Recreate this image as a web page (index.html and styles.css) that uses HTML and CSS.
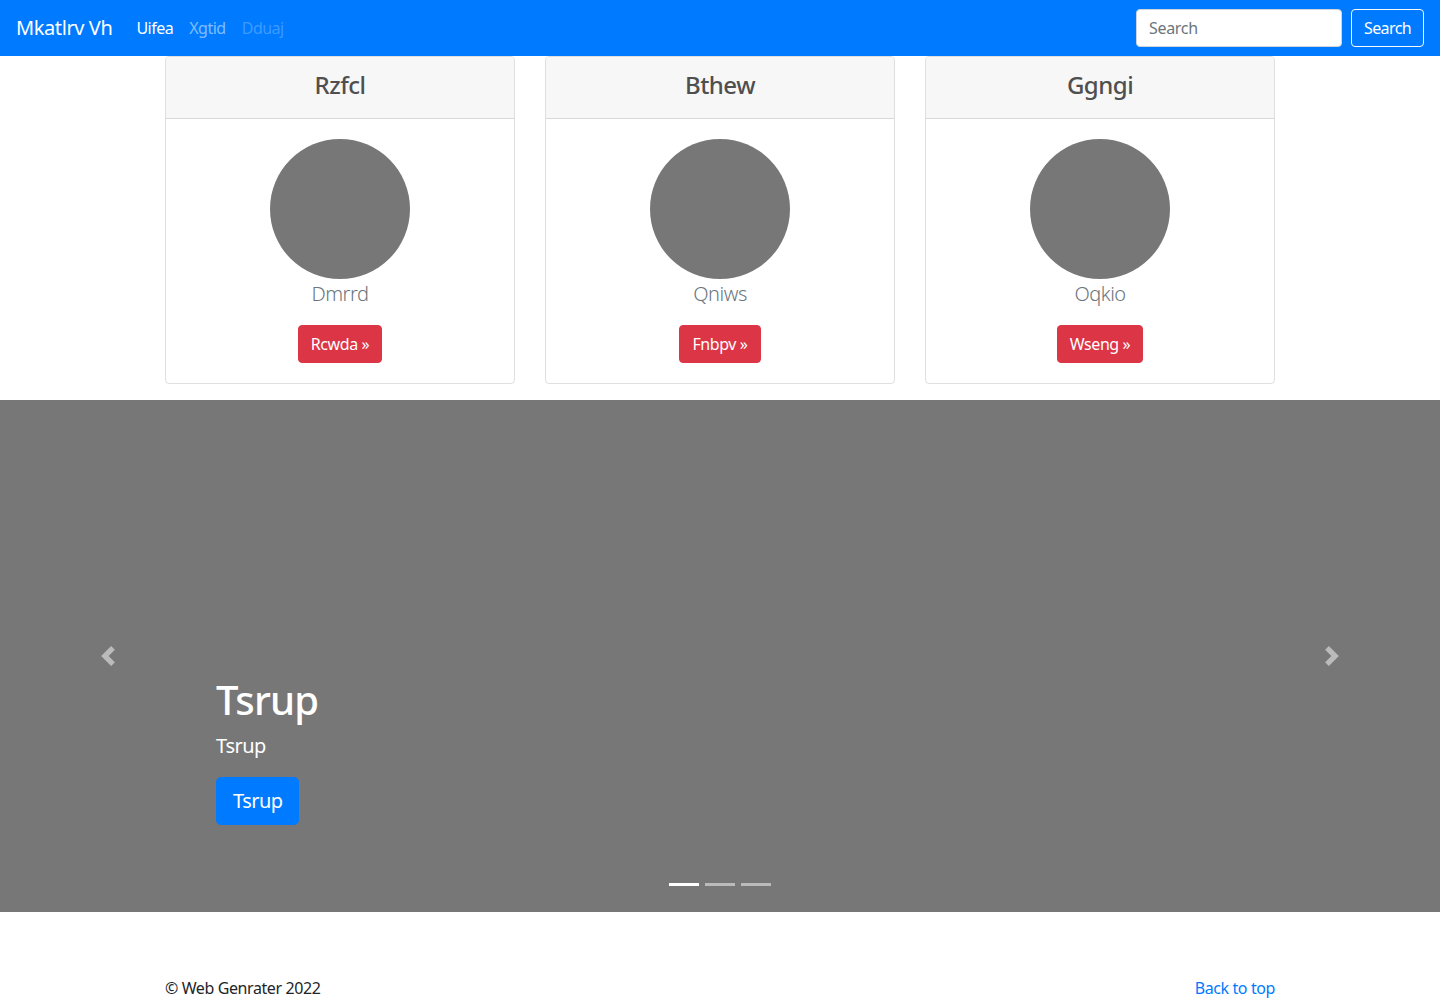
FILE: index.html
```html
<!DOCTYPE html>
<html lang="en">
<head>
<meta charset="utf-8">
<title>Mkatlrv Vh</title>
<link rel="stylesheet" href="styles.css">
</head>
<body>
<header class="navbar">
  <a class="brand" href="#">Mkatlrv Vh</a>
  <ul class="nav">
    <li><a class="nav-link active" href="#">Uifea</a></li>
    <li><a class="nav-link" href="#">Xgtid</a></li>
    <li><a class="nav-link disabled" href="#">Dduaj</a></li>
  </ul>
  <form class="search">
    <input class="search-input" type="text" placeholder="Search">
    <button class="search-btn" type="button">Search</button>
  </form>
</header>

<main>
  <section class="container cards">
    <div class="card">
      <div class="card-header"><h4 class="card-title">Rzfcl</h4></div>
      <div class="card-body">
        <div class="avatar"></div>
        <p class="lead">Dmrrd</p>
        <a class="btn-danger" href="#">Rcwda &raquo;</a>
      </div>
    </div>
    <div class="card">
      <div class="card-header"><h4 class="card-title">Bthew</h4></div>
      <div class="card-body">
        <div class="avatar"></div>
        <p class="lead">Qniws</p>
        <a class="btn-danger" href="#">Fnbpv &raquo;</a>
      </div>
    </div>
    <div class="card">
      <div class="card-header"><h4 class="card-title">Ggngi</h4></div>
      <div class="card-body">
        <div class="avatar"></div>
        <p class="lead">Oqkio</p>
        <a class="btn-danger" href="#">Wseng &raquo;</a>
      </div>
    </div>
  </section>

  <section class="carousel">
    <a class="control prev" href="#">
      <svg width="20" height="20" viewBox="0 0 8 8" fill="#fff"><path d="M5.25 0l-4 4 4 4 1.5-1.5L4.25 4l2.5-2.5L5.25 0z"/></svg>
    </a>
    <div class="caption">
      <h1 class="caption-title">Tsrup</h1>
      <p class="caption-text">Tsrup</p>
      <p class="caption-action"><a class="btn-primary" href="#">Tsrup</a></p>
    </div>
    <a class="control next" href="#">
      <svg width="20" height="20" viewBox="0 0 8 8" fill="#fff"><path d="M2.75 0l-1.5 1.5L3.75 4l-2.5 2.5L2.75 8l4-4-4-4z"/></svg>
    </a>
    <ol class="indicators">
      <li class="active"></li>
      <li></li>
      <li></li>
    </ol>
  </section>

  <footer class="container footer">
    <p class="copy">&copy; Web Genrater 2022</p>
    <a class="top-link" href="#">Back to top</a>
  </footer>
</main>
</body>
</html>
```

FILE: styles.css
```css
* { box-sizing: border-box; }

html, body {
  margin: 0;
  padding: 0;
}

body {
  font-family: "Noto Sans", "Open Sans", "DejaVu Sans", sans-serif;
  font-size: 16px;
  line-height: 1.5;
  color: #212529;
  background: #fff;
}

a { text-decoration: none; }

/* Navbar */
.navbar {
  height: 56px;
  background: #007bff;
  display: flex;
  align-items: center;
  padding: 0 16px;
}

.brand {
  color: #fff;
  font-size: 20px;
  line-height: 30px;
  margin-right: 16px;
  letter-spacing: -0.4px;
}

.nav {
  list-style: none;
  margin: 0;
  padding: 0;
  display: flex;
  flex: 1;
}

.nav-link {
  display: block;
  padding: 8px;
  color: rgba(255, 255, 255, 0.5);
  font-size: 16px;
  letter-spacing: -0.5px;
}

.nav-link.active { color: #fff; }
.nav-link.disabled { color: rgba(255, 255, 255, 0.25); }

.search {
  display: flex;
  align-items: center;
  margin: 0;
}

.search-input {
  width: 206px;
  height: 38px;
  padding: 6px 12px;
  font: inherit;
  font-size: 16px;
  color: #495057;
  border: 1px solid #ced4da;
  border-radius: 4px;
  margin-right: 9px;
  letter-spacing: -0.3px;
}

.search-input::placeholder { color: #6c757d; }

.search-btn {
  height: 38px;
  padding: 6px 12px;
  font: inherit;
  font-size: 16px;
  color: #fff;
  background: transparent;
  border: 1px solid #f8f9fa;
  border-radius: 4px;
  letter-spacing: -0.6px;
}

/* Container */
.container {
  width: 1140px;
  margin: 0 auto;
  padding: 0 15px;
}

.cards {
  display: grid;
  grid-template-columns: repeat(3, 1fr);
  column-gap: 30px;
  margin-bottom: 16px;
}

.card {
  border: 1px solid rgba(0, 0, 0, 0.125);
  border-radius: 4px;
  text-align: center;
  overflow: hidden;
}

.card-header {
  background: #f7f7f7;
  border-bottom: 1px solid rgba(0, 0, 0, 0.125);
  padding: 10px 20px 14px;
  height: 62px;
}

.card-title {
  margin: 0;
  font-size: 24px;
  font-weight: 500;
  line-height: 36px;
  color: #4f4f4f;
  letter-spacing: -0.5px;
}

.card-body {
  padding: 20px 20px 20px;
  display: flex;
  flex-direction: column;
  align-items: center;
}

.avatar {
  width: 140px;
  height: 140px;
  border-radius: 50%;
  background: #777;
}

.lead {
  margin: 0 0 16px;
  font-size: 20px;
  font-weight: 300;
  line-height: 30px;
  color: #6c757d;
  letter-spacing: -0.5px;
}

.btn-danger {
  display: inline-block;
  height: 38px;
  padding: 6px 12px;
  font-size: 16px;
  line-height: 24px;
  color: #fff;
  background: #dc3545;
  border: 1px solid #dc3545;
  border-radius: 4px;
  letter-spacing: -0.4px;
}

/* Carousel */
.carousel {
  position: relative;
  height: 512px;
  background: #777;
  display: flex;
  align-items: flex-end;
  justify-content: space-between;
}

.control {
  position: absolute;
  top: 0;
  bottom: 0;
  width: 15%;
  display: flex;
  align-items: center;
  justify-content: center;
  opacity: 0.5;
}

.control.prev { left: 0; }
.control.next { right: 0; }

.caption {
  margin: 0 15% 67px;
  padding: 20px 0;
  flex: 1;
  color: #fff;
  text-align: left;
}

.caption-title {
  margin: 0 0 7px;
  font-size: 40px;
  font-weight: 500;
  line-height: 48px;
  letter-spacing: -0.8px;
}

.caption-text {
  margin: 0 0 16px;
  font-size: 20px;
  line-height: 30px;
  letter-spacing: -0.5px;
}

.caption-action { margin: 0; }

.btn-primary {
  display: inline-block;
  padding: 8px 16px;
  font-size: 20px;
  line-height: 30px;
  color: #fff;
  background: #007bff;
  border: 1px solid #007bff;
  border-radius: 4.8px;
  letter-spacing: -0.6px;
}

.indicators {
  position: absolute;
  left: 0;
  right: 0;
  bottom: 26px;
  margin: 0;
  padding: 0;
  list-style: none;
  display: flex;
  justify-content: center;
  gap: 6px;
}

.indicators li {
  width: 30px;
  height: 3px;
  background: #fff;
  opacity: 0.5;
}

.indicators li.active { opacity: 1; }

/* Footer */
.footer {
  display: flex;
  justify-content: space-between;
  align-items: center;
  padding-top: 64px;
  padding-bottom: 16px;
}

.copy {
  margin: 0;
  letter-spacing: -0.4px;
}

.top-link {
  color: #007bff;
  letter-spacing: -0.4px;
}
```
